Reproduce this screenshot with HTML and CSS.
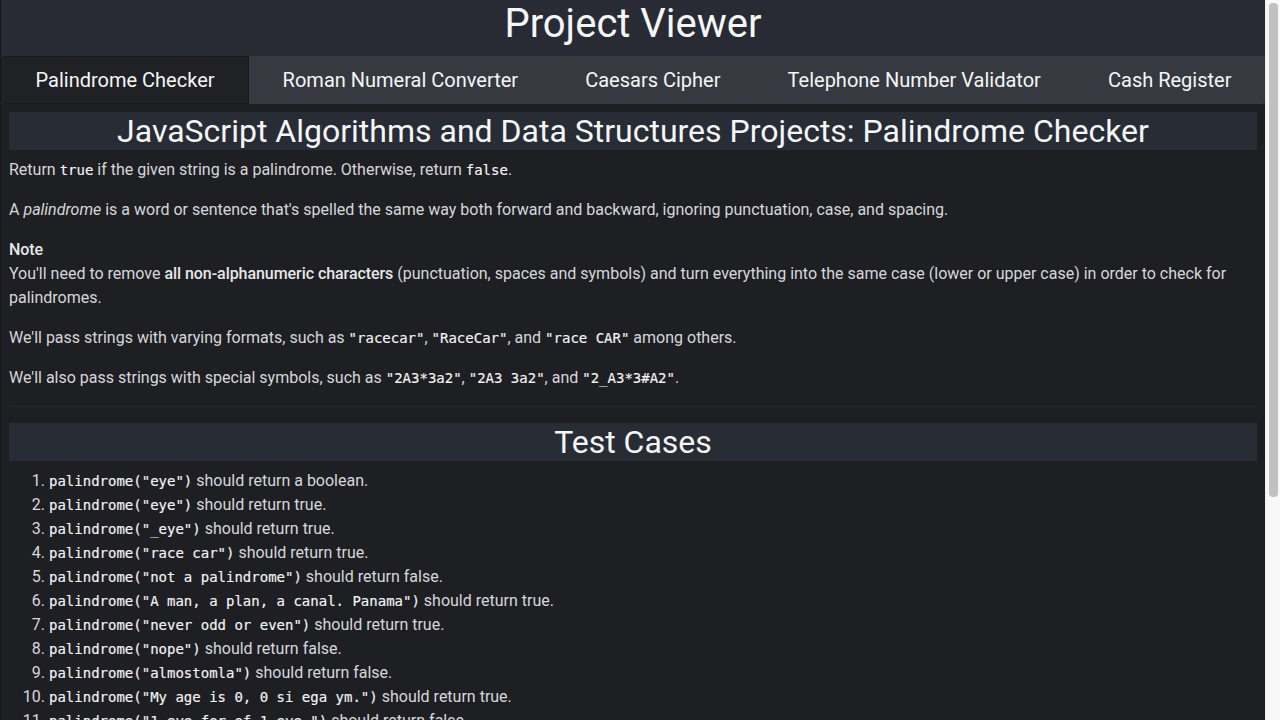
FILE: index.html
```html
<!DOCTYPE html>
<html lang="en">
<head>
<meta charset="utf-8">
<title>Project Viewer</title>
<link rel="stylesheet" href="styles.css">
</head>
<body>
<div class="page">
  <header class="site-header">
    <h1 class="site-title">Project Viewer</h1>
    <nav class="tabs">
      <a class="tab active">Palindrome Checker</a>
      <a class="tab">Roman Numeral Converter</a>
      <a class="tab">Caesars Cipher</a>
      <a class="tab">Telephone Number Validator</a>
      <a class="tab">Cash Register</a>
    </nav>
  </header>
  <main class="content">
    <section class="description">
      <h2 class="section-title">JavaScript Algorithms and Data Structures Projects: Palindrome Checker</h2>
      <p>Return <code>true</code> if the given string is a palindrome. Otherwise, return <code>false</code>.</p>
      <p>A <em>palindrome</em> is a word or sentence that's spelled the same way both forward and backward, ignoring punctuation, case, and spacing.</p>
      <p><strong class="note">Note</strong><br>You'll need to remove <strong>all non-alphanumeric characters</strong> (punctuation, spaces and symbols) and turn everything into the same case (lower or upper case) in order to check for palindromes.</p>
      <p>We'll pass strings with varying formats, such as <code>"racecar"</code>, <code>"RaceCar"</code>, and <code>"race CAR"</code> among others.</p>
      <p>We'll also pass strings with special symbols, such as <code>"2A3*3a2"</code>, <code>"2A3 3a2"</code>, and <code>"2_A3*3#A2"</code>.</p>
    </section>
    <section class="tests">
      <h2 class="section-title">Test Cases</h2>
      <ol class="test-list">
        <li><code>palindrome("eye")</code> should return a boolean.</li>
        <li><code>palindrome("eye")</code> should return true.</li>
        <li><code>palindrome("_eye")</code> should return true.</li>
        <li><code>palindrome("race car")</code> should return true.</li>
        <li><code>palindrome("not a palindrome")</code> should return false.</li>
        <li><code>palindrome("A man, a plan, a canal. Panama")</code> should return true.</li>
        <li><code>palindrome("never odd or even")</code> should return true.</li>
        <li><code>palindrome("nope")</code> should return false.</li>
        <li><code>palindrome("almostomla")</code> should return false.</li>
        <li><code>palindrome("My age is 0, 0 si ega ym.")</code> should return true.</li>
        <li><code>palindrome("1 eye for of 1 eye.")</code> should return false.</li>
        <li><code>palindrome("0_0 (: /-\ :) 0-0")</code> should return true.</li>
        <li><code>palindrome("five|\_/|four")</code> should return false.</li>
      </ol>
    </section>
  </main>
</div>
<div class="scrollbar" aria-hidden="true"><div class="scroll-thumb"></div></div>
</body>
</html>
```
FILE: styles.css
```css
html {
  background: #1e1f23;
}
body {
  margin: 0;
  background: #1e1f23;
  color: #d6d7db;
  font-family: Roboto, "Liberation Sans", sans-serif;
  font-size: 16px;
  line-height: 24px;
}
.page {
  margin-right: 15px;
  border-left: 1px solid #17181b;
  min-height: 100vh;
}
.site-header {
  background: #282b33;
}
.site-title {
  margin: 0;
  height: 56px;
  font-size: 40px;
  font-weight: 400;
  line-height: 48px;
  text-align: center;
  color: #f5f6f7;
}
.tabs {
  display: flex;
  height: 48px;
  background: #363940;
  border-radius: 0 0 4px 0;
}
.tab {
  flex: 1 1 auto;
  display: flex;
  align-items: center;
  justify-content: center;
  font-size: 20px;
  color: #f5f6f7;
  white-space: nowrap;
}
.tab.active {
  background: #1f2125;
  border-radius: 3px 0 0 3px;
  border: 1px solid #1a1b1e;
}
.content {
  padding: 8px 8px 0;
}
.description {
  border-bottom: 1px solid #25262b;
}
.section-title {
  margin: 0 0 8px;
  background: #282c34;
  font-size: 32px;
  font-weight: 400;
  line-height: 38px;
  text-align: center;
  color: #f5f6f7;
}
.tests .section-title {
  margin-top: 16px;
  margin-bottom: 8px;
}
p {
  margin: 0 0 16px;
}
strong {
  font-weight: 500;
  letter-spacing: -0.06px;
  color: #e6e7ea;
}
code {
  font-family: "DejaVu Sans Mono", "Liberation Mono", monospace;
  font-size: 14px;
  font-weight: 400;
  color: #f3f4f6;
  -webkit-text-stroke: 0.15px #f3f4f6;
}
.test-list {
  margin: 0;
  padding-left: 40px;
}
.scrollbar {
  position: fixed;
  top: 0;
  right: 0;
  width: 14px;
  height: 100vh;
  background: #f8f8f8;
  border-left: 1px solid #ececec;
}
.scroll-thumb {
  margin: 3px 2px 0 3px;
  height: 494px;
  background: #c1c1c1;
  border-radius: 4px;
}
```
